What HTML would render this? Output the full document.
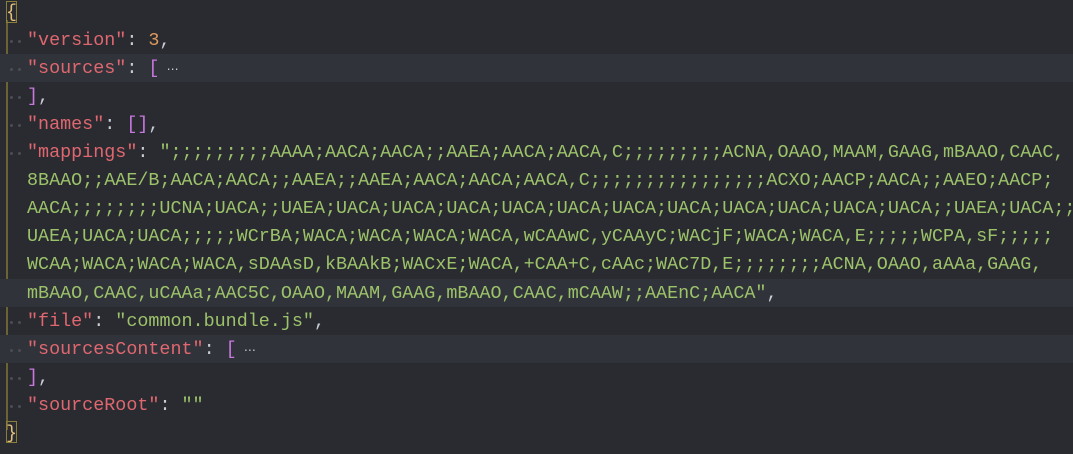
<!DOCTYPE html>
<html><head><meta charset="utf-8"><style>
html,body{margin:0;padding:0;}
body{width:1073px;height:454px;overflow:hidden;background:#292b31;font-family:"Liberation Mono",monospace;font-size:18.4px;}
.l{position:absolute;left:0;width:1073px;height:28px;line-height:28px;white-space:pre;}
.hl{background:#31333a;}
.t{position:absolute;left:27px;top:1px;}
.k{color:#e0676f}.s{color:#9cc26a}.n{color:#de9a5c}.p{color:#c678dd}.w{color:#c8ccd4}.y{color:#e5c07b}
.g{position:absolute;left:6px;top:20px;width:2px;height:410px;background:#6a6434;}
.d{position:absolute;top:14px;width:3px;height:3px;border-radius:2px;background:#4a4d55;}
.br{position:absolute;left:6px;width:11px;height:22px;border:1px solid #8a7f3a;box-sizing:border-box;}
</style></head><body>
<div class="g"></div>
<div class="l" style="top:-2px"><span class="t y" style="left:6px">{</span></div>
<div class="br" style="top:1px"></div>
<div class="l" style="top:26px"><i class="d" style="left:10px"></i><i class="d" style="left:18px"></i><span class="t"><span class="k">"version"</span><span class="w">: </span><span class="n">3</span><span class="w">,</span></span></div>
<div class="l hl" style="top:54px"><i class="d" style="left:10px"></i><i class="d" style="left:18px"></i><span class="t"><span class="k">"sources"</span><span class="w">: </span><span class="p">[</span><span class="w" style="font-size:12px"> ⋯</span></span></div>
<div class="l" style="top:82px"><i class="d" style="left:10px"></i><i class="d" style="left:18px"></i><span class="t"><span class="p">]</span><span class="w">,</span></span></div>
<div class="l" style="top:110px"><i class="d" style="left:10px"></i><i class="d" style="left:18px"></i><span class="t"><span class="k">"names"</span><span class="w">: </span><span class="p">[]</span><span class="w">,</span></span></div>
<div class="l" style="top:138px"><i class="d" style="left:10px"></i><i class="d" style="left:18px"></i><span class="t"><span class="k">"mappings"</span><span class="w">: </span><span class="s">";;;;;;;;;AAAA;AACA;AACA;;AAEA;AACA;AACA,C;;;;;;;;;ACNA,OAAO,MAAM,GAAG,mBAAO,CAAC,</span></span></div>
<div class="l" style="top:166px"><span class="t s">8BAAO;;AAE/B;AACA;AACA;;AAEA;;AAEA;AACA;AACA;AACA,C;;;;;;;;;;;;;;;;ACXO;AACP;AACA;;AAEO;AACP;</span></div>
<div class="l" style="top:194px"><span class="t s">AACA;;;;;;;;UCNA;UACA;;UAEA;UACA;UACA;UACA;UACA;UACA;UACA;UACA;UACA;UACA;UACA;UACA;;UAEA;UACA;;</span></div>
<div class="l" style="top:222px"><span class="t s">UAEA;UACA;UACA;;;;;WCrBA;WACA;WACA;WACA;WACA,wCAAwC,yCAAyC;WACjF;WACA;WACA,E;;;;;WCPA,sF;;;;;</span></div>
<div class="l" style="top:250px"><span class="t s">WCAA;WACA;WACA;WACA,sDAAsD,kBAAkB;WACxE;WACA,+CAA+C,cAAc;WAC7D,E;;;;;;;;ACNA,OAAO,aAAa,GAAG,</span></div>
<div class="l hl" style="top:279px"><span class="t"><span class="s">mBAAO,CAAC,uCAAa;AAC5C,OAAO,MAAM,GAAG,mBAAO,CAAC,mCAAW;;AAEnC;AACA"</span><span class="w">,</span></span></div>
<div class="l" style="top:307px"><i class="d" style="left:10px"></i><i class="d" style="left:18px"></i><span class="t"><span class="k">"file"</span><span class="w">: </span><span class="s">"common.bundle.js"</span><span class="w">,</span></span></div>
<div class="l hl" style="top:335px"><i class="d" style="left:10px"></i><i class="d" style="left:18px"></i><span class="t"><span class="k">"sourcesContent"</span><span class="w">: </span><span class="p">[</span><span class="w" style="font-size:12px"> ⋯</span></span></div>
<div class="l" style="top:363px"><i class="d" style="left:10px"></i><i class="d" style="left:18px"></i><span class="t"><span class="p">]</span><span class="w">,</span></span></div>
<div class="l" style="top:391px"><i class="d" style="left:10px"></i><i class="d" style="left:18px"></i><span class="t"><span class="k">"sourceRoot"</span><span class="w">: </span><span class="s">""</span></span></div>
<div class="l" style="top:419px"><span class="t y" style="left:6px">}</span></div>
<div class="br" style="top:421px"></div>
</body></html>
